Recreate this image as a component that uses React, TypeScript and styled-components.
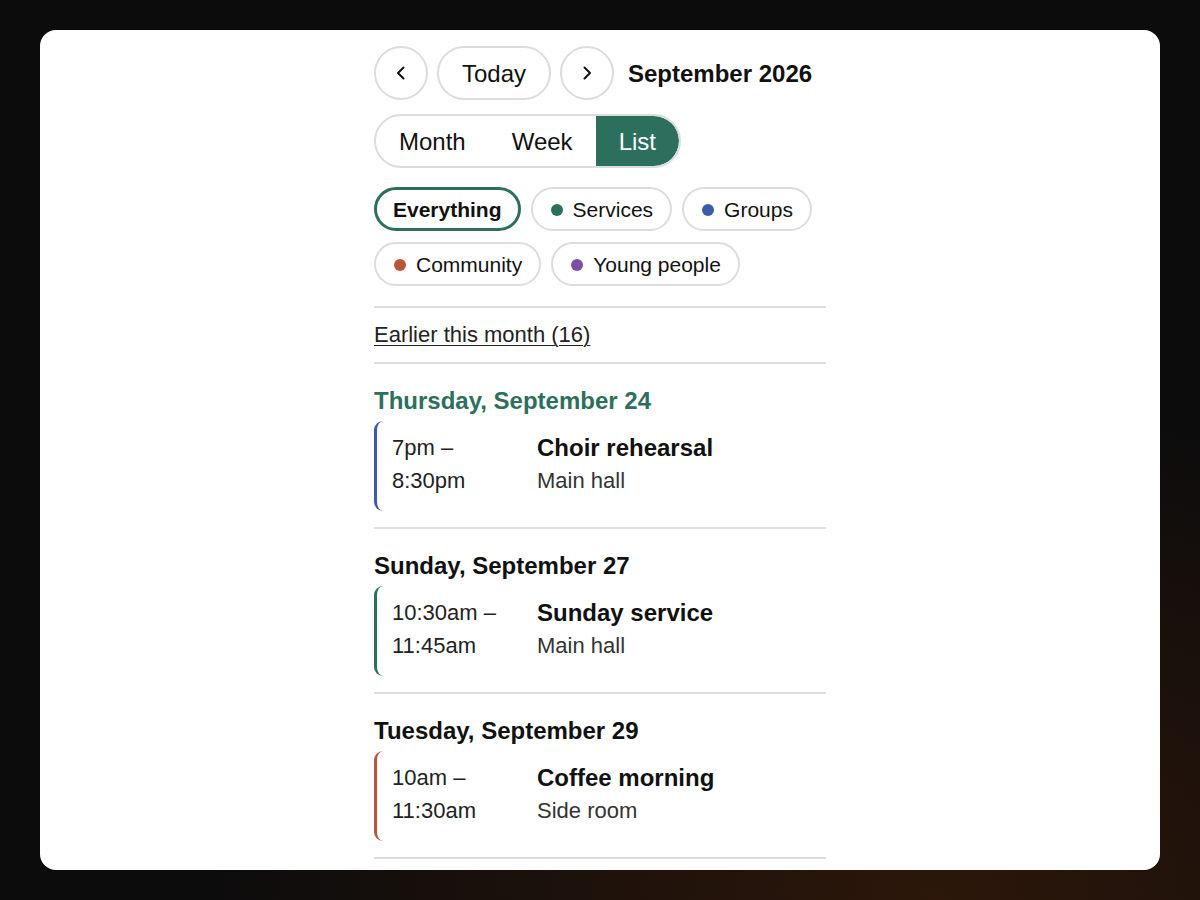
import React from "react";
import styled, { createGlobalStyle } from "styled-components";

const GlobalStyle = createGlobalStyle`
  html, body {
    margin: 0;
    padding: 0;
  }
  body {
    height: 900px;
    overflow: hidden;
    font-family: "Liberation Sans", Arial, sans-serif;
    color: #111;
    background-color: #0d0c0c;
    background-image: radial-gradient(ellipse 900px 620px at 78% 100%, rgba(46, 23, 10, 0.95), rgba(13, 12, 12, 0) 80%);
  }
`;

const GREEN = "#2d6f5d";

const categories = [
  { name: "Services", color: GREEN },
  { name: "Groups", color: "#3b5bab" },
  { name: "Community", color: "#b9553b" },
  { name: "Young people", color: "#7c4fa5" },
];

const days = [
  {
    label: "Thursday, September 24",
    today: true,
    events: [{ start: "7pm –", end: "8:30pm", title: "Choir rehearsal", place: "Main hall", color: "#3b5bab" }],
  },
  {
    label: "Sunday, September 27",
    today: false,
    events: [{ start: "10:30am –", end: "11:45am", title: "Sunday service", place: "Main hall", color: GREEN }],
  },
  {
    label: "Tuesday, September 29",
    today: false,
    events: [{ start: "10am –", end: "11:30am", title: "Coffee morning", place: "Side room", color: "#b9553b" }],
  },
];

function Chevron({ dir }: { dir: "left" | "right" }) {
  return (
    <svg width="14" height="16" viewBox="0 0 14 16" fill="none">
      <polyline
        points={dir === "left" ? "9.5,2.5 4,8 9.5,13.5" : "4.5,2.5 10,8 4.5,13.5"}
        stroke="#111"
        strokeWidth="2"
        strokeLinecap="round"
        strokeLinejoin="round"
      />
    </svg>
  );
}

export default function App() {
  return (
    <>
      <GlobalStyle />
      <Card>
        <Column>
          <NavRow>
            <RoundButton aria-label="Previous month">
              <Chevron dir="left" />
            </RoundButton>
            <PillButton>Today</PillButton>
            <RoundButton aria-label="Next month">
              <Chevron dir="right" />
            </RoundButton>
            <MonthTitle>September 2026</MonthTitle>
          </NavRow>

          <ViewToggle>
            <ViewOption>Month</ViewOption>
            <ViewOption>Week</ViewOption>
            <ViewOption $active>List</ViewOption>
          </ViewToggle>

          <Filters>
            <Chip $active>Everything</Chip>
            {categories.map((c) => (
              <Chip key={c.name}>
                <Dot $color={c.color} />
                {c.name}
              </Chip>
            ))}
          </Filters>

          <EarlierRow>
            <EarlierLink href="#">Earlier this month (16)</EarlierLink>
          </EarlierRow>

          {days.map((d) => (
            <DaySection key={d.label}>
              <DayHeading $today={d.today}>{d.label}</DayHeading>
              {d.events.map((e) => (
                <EventItem key={e.title} $color={e.color}>
                  <TimeCol>
                    <div>{e.start}</div>
                    <div>{e.end}</div>
                  </TimeCol>
                  <Details>
                    <EventTitle>{e.title}</EventTitle>
                    <EventPlace>{e.place}</EventPlace>
                  </Details>
                </EventItem>
              ))}
            </DaySection>
          ))}
        </Column>
      </Card>
    </>
  );
}

const Card = styled.div`
  margin: 30px 40px;
  height: 840px;
  background: #fff;
  border-radius: 16px;
  overflow: hidden;
`;

const Column = styled.div`
  width: 452px;
  margin: 0 auto;
  padding-top: 16px;
`;

const NavRow = styled.div`
  display: flex;
  align-items: center;
  gap: 9px;
`;

const RoundButton = styled.button`
  width: 54px;
  height: 54px;
  border-radius: 50%;
  border: 2px solid #dcdcdc;
  background: #fff;
  display: flex;
  align-items: center;
  justify-content: center;
  padding: 0;
`;

const PillButton = styled.button`
  height: 54px;
  width: 114px;
  border-radius: 27px;
  border: 2px solid #dcdcdc;
  background: #fff;
  font-family: inherit;
  font-size: 24px;
  color: #111;
  padding: 1px 0 0;
`;

const MonthTitle = styled.h1`
  margin: 1px 0 0 5px;
  font-size: 24px;
  font-weight: 700;
  color: #111;
`;

const ViewToggle = styled.div`
  margin-top: 14px;
  display: inline-flex;
  height: 54px;
  border: 2px solid #dcdcdc;
  border-radius: 27px;
  overflow: hidden;
  box-sizing: border-box;
`;

const ViewOption = styled.div<{ $active?: boolean }>`
  display: flex;
  align-items: center;
  padding: 1px 23px 0;
  font-size: 24px;
  color: ${(p) => (p.$active ? "#fff" : "#111")};
  background: ${(p) => (p.$active ? GREEN : "transparent")};
  border-radius: ${(p) => (p.$active ? "0 27px 27px 0" : "0")};
`;

const Filters = styled.div`
  margin-top: 19px;
  display: flex;
  flex-wrap: wrap;
  gap: 11px 10px;
  padding-bottom: 20px;
  border-bottom: 2px solid #dddddd;
`;

const Chip = styled.div<{ $active?: boolean }>`
  box-sizing: border-box;
  height: 44px;
  display: flex;
  align-items: center;
  gap: 10px;
  padding: ${(p) => (p.$active ? "1px 16px 0" : "1px 17px 0 18px")};
  border-radius: 22px;
  border: ${(p) => (p.$active ? `3px solid ${GREEN}` : "2px solid #dcdcdc")};
  font-size: 21px;
  font-weight: ${(p) => (p.$active ? 700 : 400)};
  color: #111;
`;

const Dot = styled.span<{ $color: string }>`
  width: 12px;
  height: 12px;
  border-radius: 50%;
  background: ${(p) => p.$color};
`;

const EarlierRow = styled.div`
  padding: 15px 0 15px;
  border-bottom: 2px solid #dddddd;
`;

const EarlierLink = styled.a`
  font-size: 22px;
  color: #222;
  text-decoration: underline;
  text-underline-offset: 3px;
  text-decoration-thickness: 1px;
  line-height: 24px;
`;

const DaySection = styled.section`
  padding: 24px 0 16px;
  border-bottom: 2px solid #dddddd;
`;

const DayHeading = styled.h2<{ $today?: boolean }>`
  margin: 0 0 7px;
  font-size: 24px;
  line-height: 26px;
  font-weight: 700;
  color: ${(p) => (p.$today ? GREEN : "#111")};
`;

const EventItem = styled.div<{ $color: string }>`
  display: flex;
  padding: 10px 0 14px 15px;
  border-left: 3px solid ${(p) => p.$color};
  border-radius: 9px 0 0 9px;
`;

const TimeCol = styled.div`
  width: 145px;
  flex-shrink: 0;
  font-size: 22px;
  line-height: 33px;
  color: #222;
`;

const Details = styled.div`
  display: flex;
  flex-direction: column;
`;

const EventTitle = styled.div`
  font-size: 24px;
  font-weight: 700;
  line-height: 33px;
  color: #111;
`;

const EventPlace = styled.div`
  font-size: 22px;
  line-height: 33px;
  color: #333;
`;
